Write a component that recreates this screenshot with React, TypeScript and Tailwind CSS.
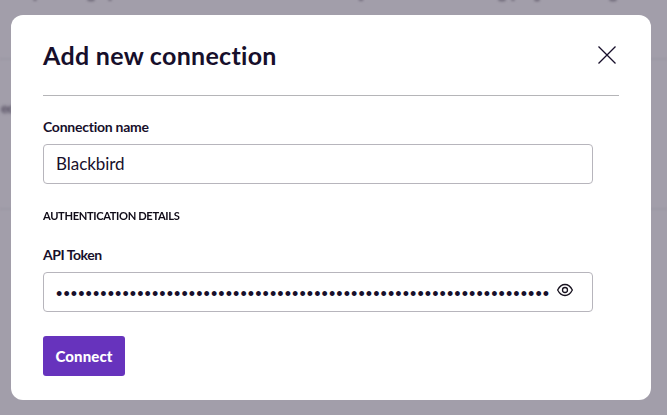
import type { ReactNode } from "react";

const TOKEN = "•".repeat(67);

function Label({ children }: { children: ReactNode }) {
  return <span className="block h-5 whitespace-nowrap text-[14px] leading-5 font-bold">{children}</span>;
}

function CloseIcon() {
  return (
    <svg width="24" height="24" viewBox="0 0 24 24" fill="none" stroke="#170f2b" strokeWidth="1.25">
      <path d="M3.5 3.5 20.5 20.5M20.5 3.5 3.5 20.5" />
    </svg>
  );
}

function EyeIcon() {
  return (
    <svg width="16" height="16" viewBox="0 0 16 16" fill="none" stroke="#17121f" strokeWidth="1.3">
      <path d="M.65 8C2.4 4.5 5 2.5 8 2.5S13.6 4.5 15.35 8C13.6 11.5 11 13.5 8 13.5S2.4 11.5.65 8Z" />
      <circle cx="8" cy="8" r="2.5" />
    </svg>
  );
}

function Backdrop() {
  return (
    <div className="flex h-full flex-col bg-[#a29eaa]">
      <svg width="667" height="58" viewBox="0 0 667 58" className="block shrink-0">
        <g fill="#777180" className="blur-[1px]">
          <ellipse cx="35" cy="-.5" rx="2" ry="1.5" />
          <ellipse cx="91" cy="-.5" rx="4" ry="2" />
          <ellipse cx="110" cy="-.5" rx="2" ry="1.5" />
          <ellipse cx="361" cy="-.5" rx="2.5" ry="1.8" />
          <ellipse cx="502" cy="-.5" rx="4" ry="2" />
          <ellipse cx="513" cy="-.5" rx="2" ry="1.5" />
          <ellipse cx="537" cy="-.5" rx="3" ry="2" />
          <ellipse cx="613" cy="-.5" rx="4" ry="2" />
        </g>
      </svg>
      <div className="h-[152px] border-y-2 border-[#9c98a4] pt-[38px] blur-[1px]">
        <span className="block h-5 pl-px text-[14px] leading-5 font-bold tracking-[-0.7px] text-[#514a5e] blur-[1px]">ed</span>
      </div>
    </div>
  );
}

export default function App() {
  return (
    <div className="relative h-[415px] w-[667px] overflow-hidden font-['Lato','Open_Sans',sans-serif] text-[#170f2b]">
      <Backdrop />
      <div className="absolute inset-0 flex items-start justify-start px-[11px] pt-[15px]">
        <main className="h-[385px] w-[640px] rounded-xl bg-white px-8 pt-6">
          <header className="flex h-[57px] items-start justify-between border-b border-[#b5b5b8]">
            <h1 className="h-8 whitespace-nowrap text-[25px] leading-8 font-bold tracking-[0.3px]">Add new connection</h1>
            <button aria-label="Close" className="mt-1">
              <CloseIcon />
            </button>
          </header>
          <form className="flex w-[550px] flex-col items-start pt-[21px]">
            <div className="flex w-full flex-col gap-[7px] tracking-[-0.25px]">
              <Label>Connection name</Label>
              <div className="flex h-10 items-center rounded border border-[#b7b5bc] px-3 text-[17px] leading-6 tracking-[-0.05px]">Blackbird</div>
            </div>
            <h2 className="mt-[22px] h-5 origin-left scale-x-[0.93] whitespace-nowrap text-[12px] leading-5 font-bold tracking-[-0.4px] text-[#100c18]">AUTHENTICATION DETAILS</h2>
            <div className="flex w-full flex-col gap-[7px] pt-[19px] tracking-[-0.45px]">
              <Label>API Token</Label>
              <div className="flex h-10 items-start gap-[6px] rounded border border-[#b7b5bc] pt-[9px] pl-3">
                <span className="w-[495px] whitespace-nowrap font-['Liberation_Sans',sans-serif] text-[18px] leading-6 tracking-[1.075px]">{TOKEN}</span>
                <button type="button" aria-label="Show token">
                  <EyeIcon />
                </button>
              </div>
            </div>
            <button type="button" className="mt-6 flex h-10 w-[82px] items-center justify-center rounded-[3px] bg-[#6733bd] text-[15px] font-black tracking-[0.1px] text-white">Connect</button>
          </form>
        </main>
      </div>
    </div>
  );
}
